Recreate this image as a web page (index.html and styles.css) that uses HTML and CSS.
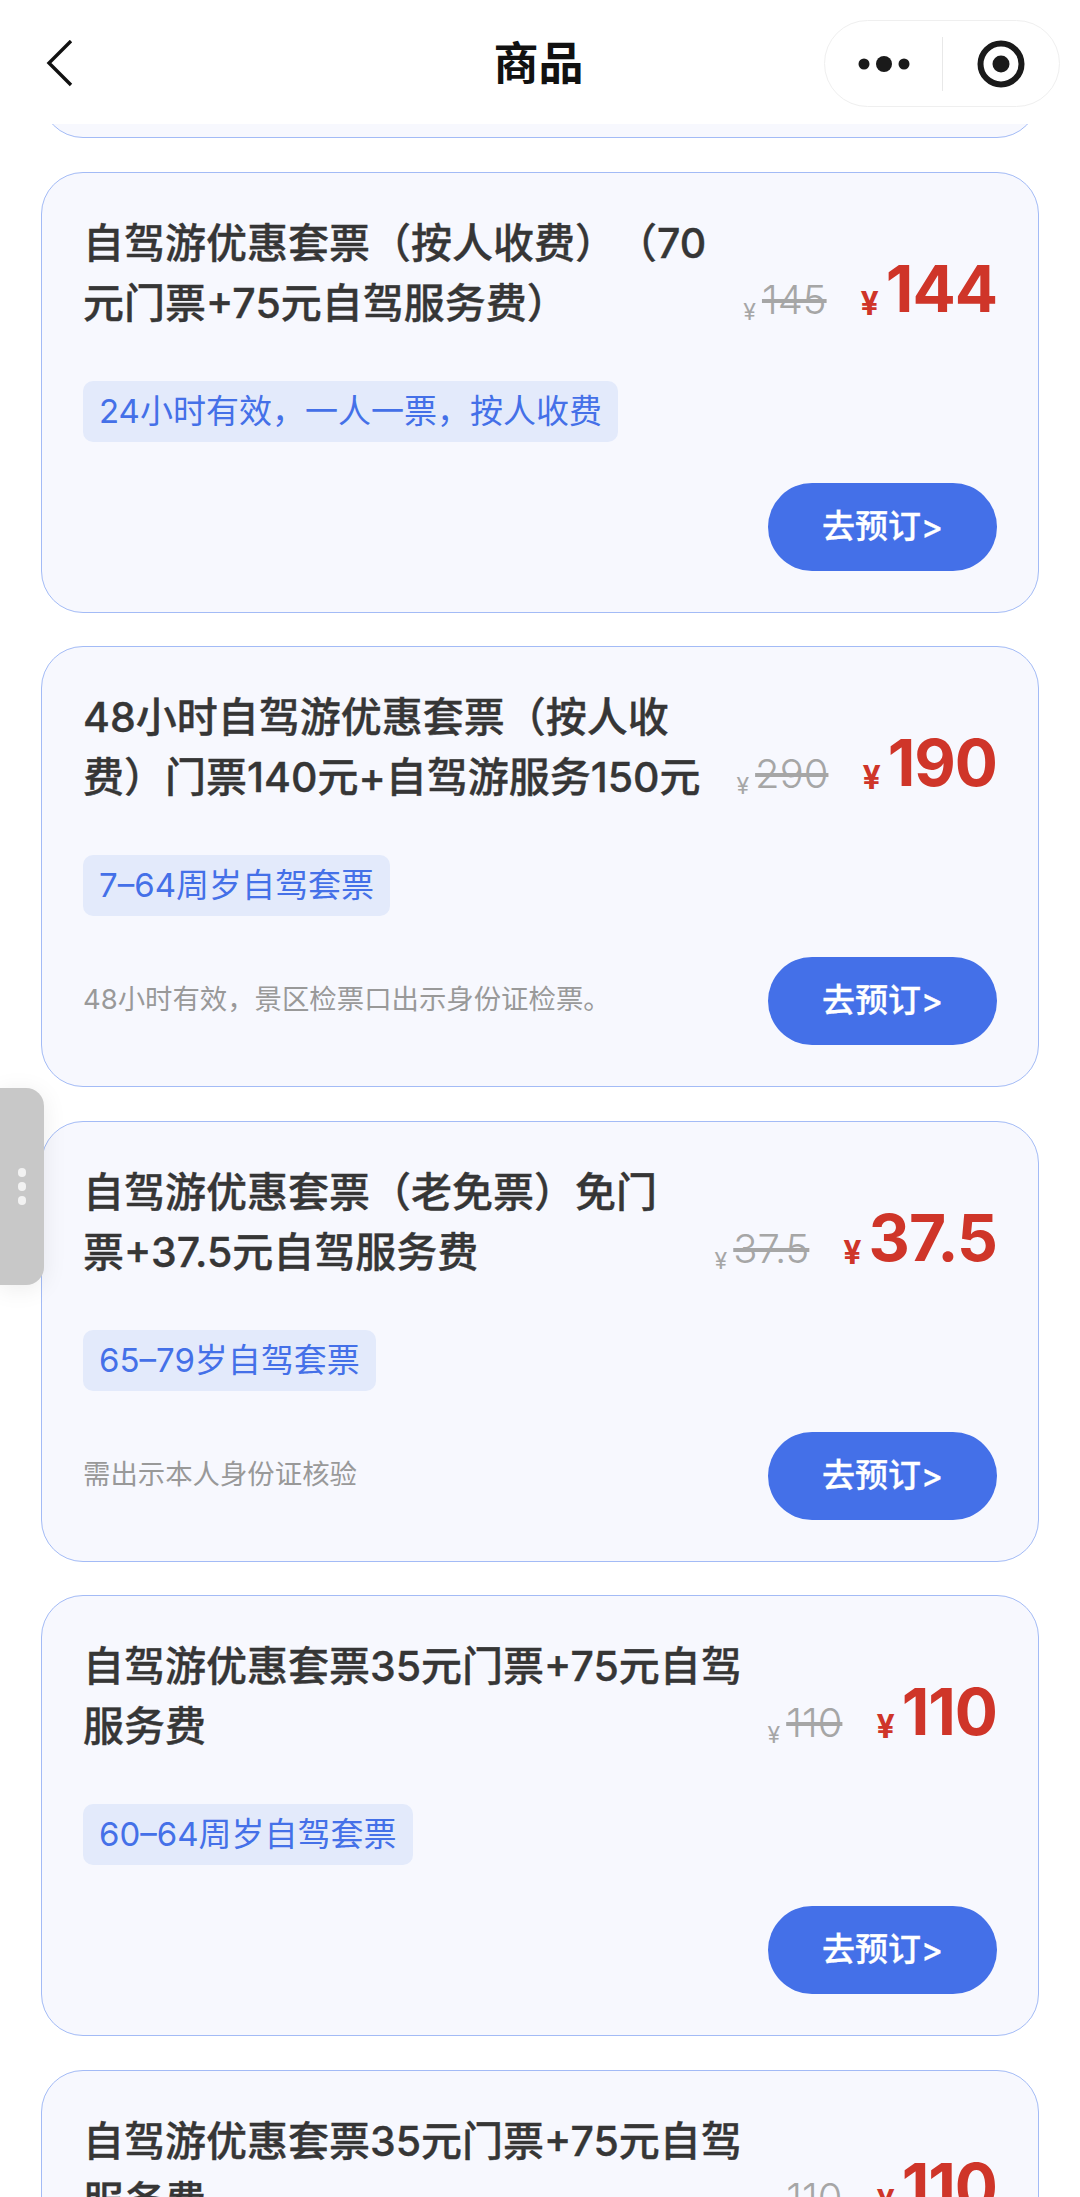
FILE: index.html
```html
<!DOCTYPE html>
<html lang="zh-CN">
<head>
    <meta charset="utf-8">
    <title>商品</title>
    <link rel="stylesheet" href="styles.css">
</head>
<body>
    <header class="nav">
        <svg class="back" width="28" height="48" viewBox="0 0 28 48"><path d="M25 1 L3 23 L25 45"/></svg>
        <h1 class="nav-title">商品</h1>
        <div class="capsule">
            <svg class="more" width="56" height="20" viewBox="0 0 56 20"><circle cx="8" cy="10" r="5.5"/><circle cx="28" cy="10" r="8"/><circle cx="48" cy="10" r="5.5"/></svg>
            <span class="capsule-line"></span>
            <svg class="target" width="48" height="48" viewBox="0 0 48 48"><circle class="ring" cx="24" cy="24" r="20.5"/><circle cx="24" cy="24" r="8.5"/></svg>
        </div>
    </header>

    <main class="list">
        <section class="card card-cut"></section>

        <section class="card">
            <div class="card-top">
                <h2 class="title">自驾游优惠套票（按人收费）（70<br>元门票+75元自驾服务费）</h2>
                <div class="price">
                    <span class="old-yen">¥</span><s class="old">145</s>
                    <span class="yen">¥</span><b class="now">144</b>
                </div>
            </div>
            <span class="tag">24小时有效，一人一票，按人收费</span>
            <div class="card-bottom">
                <p class="note"></p>
                <a class="btn">去预订&gt;</a>
            </div>
        </section>

        <section class="card">
            <div class="card-top">
                <h2 class="title">48小时自驾游优惠套票（按人收<br>费）门票140元+自驾游服务150元</h2>
                <div class="price">
                    <span class="old-yen">¥</span><s class="old">290</s>
                    <span class="yen">¥</span><b class="now">190</b>
                </div>
            </div>
            <span class="tag">7–64周岁自驾套票</span>
            <div class="card-bottom">
                <p class="note">48小时有效，景区检票口出示身份证检票。</p>
                <a class="btn">去预订&gt;</a>
            </div>
        </section>

        <section class="card">
            <div class="card-top">
                <h2 class="title">自驾游优惠套票（老免票）免门<br>票+37.5元自驾服务费</h2>
                <div class="price">
                    <span class="old-yen">¥</span><s class="old">37.5</s>
                    <span class="yen">¥</span><b class="now">37.5</b>
                </div>
            </div>
            <span class="tag">65–79岁自驾套票</span>
            <div class="card-bottom">
                <p class="note">需出示本人身份证核验</p>
                <a class="btn">去预订&gt;</a>
            </div>
        </section>

        <section class="card">
            <div class="card-top">
                <h2 class="title">自驾游优惠套票35元门票+75元自驾<br>服务费</h2>
                <div class="price">
                    <span class="old-yen">¥</span><s class="old">110</s>
                    <span class="yen">¥</span><b class="now">110</b>
                </div>
            </div>
            <span class="tag">60–64周岁自驾套票</span>
            <div class="card-bottom">
                <p class="note"></p>
                <a class="btn">去预订&gt;</a>
            </div>
        </section>

        <section class="card">
            <div class="card-top">
                <h2 class="title">自驾游优惠套票35元门票+75元自驾<br>服务费</h2>
                <div class="price">
                    <span class="old-yen">¥</span><s class="old">110</s>
                    <span class="yen">¥</span><b class="now">110</b>
                </div>
            </div>
        </section>
    </main>

    <div class="handle"><i></i><i></i><i></i></div>
</body>
</html>
```

FILE: styles.css
```css
*{margin:0;padding:0;box-sizing:border-box;}
html,body{height:100%;}
body{background:#fff;overflow:hidden;font-family:"Inter","Noto Sans CJK SC",sans-serif;color:#333;position:relative;display:flex;flex-direction:column;text-spacing-trim:space-all;}

/* top bar */
.nav{height:124px;flex:none;background:#fff;display:grid;grid-template-columns:1fr auto 1fr;align-items:start;padding:20px 20px 0;position:relative;z-index:2;}
.back{margin:20px 0 0 26px;}
.back path{fill:none;stroke:#111;stroke-width:3.4;}
.nav-title{font-size:45px;font-weight:700;line-height:87px;color:#111;margin-left:-3px;}
.capsule{justify-self:end;width:236px;height:87px;border:1px solid #efefef;border-radius:44px;display:flex;align-items:center;padding-left:31px;background:#fff;}
.more{fill:#1a1a1a;flex:none;}
.capsule-line{width:1px;height:54px;background:#e8e8e8;margin-left:30px;flex:none;}
.target{fill:#1a1a1a;margin-left:34px;flex:none;}
.target .ring{fill:none;stroke:#1a1a1a;stroke-width:6;}

/* list */
.list{flex:1;min-height:0;overflow:hidden;padding:0 41px;display:flex;flex-direction:column;gap:33.6px;}
.card{flex:none;height:441px;background:#f7f8fe;border:1.5px solid #a3bbf6;border-radius:42px;padding:40px 41px 40px 41px;display:flex;flex-direction:column;}
.card-cut{margin-top:-427px;}
.card-top{display:flex;justify-content:space-between;align-items:flex-start;height:120px;}
.title{font-size:41px;font-weight:500;-webkit-text-stroke:.35px #363636;line-height:60px;color:#363636;white-space:nowrap;}
.price{display:flex;align-items:flex-end;height:120px;padding-bottom:8px;}
.old-yen{font-size:23px;line-height:23px;color:#a6a6a6;margin-bottom:1px;margin-right:6px;}
.old{font-size:40px;line-height:40px;color:#a6a6a6;font-weight:300;margin-bottom:5px;}
.yen{font-size:32px;line-height:32px;font-weight:700;color:#cf3529;margin-left:34px;margin-right:7px;margin-bottom:5px;}
.now{font-size:64px;line-height:65px;font-weight:700;color:#cf3529;margin-bottom:4px;letter-spacing:-1px;}

.tag{align-self:flex-start;height:61px;line-height:61px;margin-top:48px;padding:0 16px;background:#e3eafb;border-radius:10px;font-size:33px;color:#4470e8;white-space:nowrap;}
.card-bottom{display:flex;justify-content:space-between;align-items:center;margin-top:41px;}
.note{font-size:27.4px;line-height:32px;color:#999;white-space:nowrap;margin-bottom:4px;}
.btn{width:229px;height:88px;line-height:86px;text-align:center;background:#4470e8;border-radius:44px;color:#fff;font-size:33px;font-weight:500;-webkit-text-stroke:.3px #fff;flex:none;}

/* floating handle on the left edge */
.handle{position:absolute;left:0;top:1088px;width:44px;height:197px;background:#c8c8c8;border-radius:0 18px 18px 0;box-shadow:0 4px 24px rgba(0,0,0,.08);display:flex;flex-direction:column;align-items:center;justify-content:center;gap:5.5px;z-index:3;}
.handle i{width:8.5px;height:8.5px;border-radius:50%;background:#f2f2f2;display:block;}
```
